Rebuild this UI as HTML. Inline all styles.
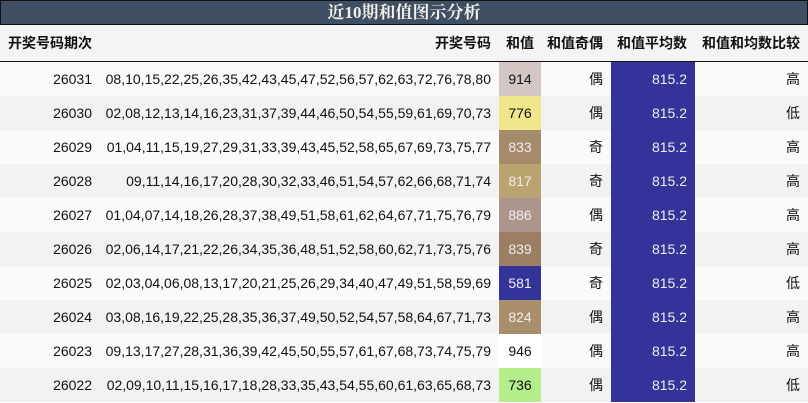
<!DOCTYPE html>
<html><head><meta charset="utf-8"><style>
body{margin:0;width:808px;height:403px;overflow:hidden;background:#fff;font-family:"Liberation Sans","Noto Sans CJK SC",sans-serif;font-size:14px;color:#111}
.t{position:absolute;left:0;top:0;width:806px;height:23px;background:#3f4f63;border:1px solid #111;color:#f4f0e6;font:bold 17px "Liberation Serif","Noto Serif CJK SC",serif;text-align:center;line-height:24px}
table{position:absolute;left:0;top:25px;border-collapse:collapse;width:808px;table-layout:fixed}
td,th{padding:0 8px 0 0;text-align:right;white-space:nowrap}
th{height:36px;font-weight:bold;background:#f4f4f4;border-bottom:1px solid #111;font-size:14px}
th:first-child{text-align:left;padding-left:8px}
td{height:34px}
tr:nth-child(odd) td{background:#f2f2f2}
tr:nth-child(even) td{background:#fafafa}
td.s{text-align:center;padding:0}
td.a{background:#333399!important;color:#eee;padding-right:8px}
.w{color:#eee}
</style></head><body>
<div class="t">近10期和值图示分析</div>
<table>
<colgroup><col style="width:100px"><col style="width:399px"><col style="width:42px"><col style="width:70px"><col style="width:84px"><col style="width:113px"></colgroup>
<tr><th>开奖号码期次</th><th>开奖号码</th><th style="text-align:center;padding:0">和值</th><th>和值奇偶</th><th>和值平均数</th><th>和值和均数比较</th></tr>
<tr><td>26031</td><td>08,10,15,22,25,26,35,42,43,45,47,52,56,57,62,63,72,76,78,80</td><td class="s" style="background:#d3c7c3">914</td><td>偶</td><td class="a">815.2</td><td>高</td></tr>
<tr><td>26030</td><td>02,08,12,13,14,16,23,31,37,39,44,46,50,54,55,59,61,69,70,73</td><td class="s" style="background:#f0e68c">776</td><td>偶</td><td class="a">815.2</td><td>低</td></tr>
<tr><td>26029</td><td>01,04,11,15,19,27,29,31,33,39,43,45,52,58,65,67,69,73,75,77</td><td class="s w" style="background:#a58a6b">833</td><td>奇</td><td class="a">815.2</td><td>高</td></tr>
<tr><td>26028</td><td>09,11,14,16,17,20,28,30,32,33,46,51,54,57,62,66,68,71,74</td><td class="s w" style="background:#b9a36f">817</td><td>奇</td><td class="a">815.2</td><td>高</td></tr>
<tr><td>26027</td><td>01,04,07,14,18,26,28,37,38,49,51,58,61,62,64,67,71,75,76,79</td><td class="s w" style="background:#ad958e">886</td><td>偶</td><td class="a">815.2</td><td>高</td></tr>
<tr><td>26026</td><td>02,06,14,17,21,22,26,34,35,36,48,51,52,58,60,62,71,73,75,76</td><td class="s w" style="background:#9c7e62">839</td><td>奇</td><td class="a">815.2</td><td>高</td></tr>
<tr><td>26025</td><td>02,03,04,06,08,13,17,20,21,25,26,29,34,40,47,49,51,58,59,69</td><td class="s w" style="background:#333399">581</td><td>奇</td><td class="a">815.2</td><td>低</td></tr>
<tr><td>26024</td><td>03,08,16,19,22,25,28,35,36,37,49,50,52,54,57,58,64,67,71,73</td><td class="s w" style="background:#a88e6b">824</td><td>偶</td><td class="a">815.2</td><td>高</td></tr>
<tr><td>26023</td><td>09,13,17,27,28,31,36,39,42,45,50,55,57,61,67,68,73,74,75,79</td><td class="s" style="background:#fff">946</td><td>偶</td><td class="a">815.2</td><td>高</td></tr>
<tr><td>26022</td><td>02,09,10,11,15,16,17,18,28,33,35,43,54,55,60,61,63,65,68,73</td><td class="s" style="background:#b4ee8a">736</td><td>偶</td><td class="a">815.2</td><td>低</td></tr>
</table>
</body></html>
